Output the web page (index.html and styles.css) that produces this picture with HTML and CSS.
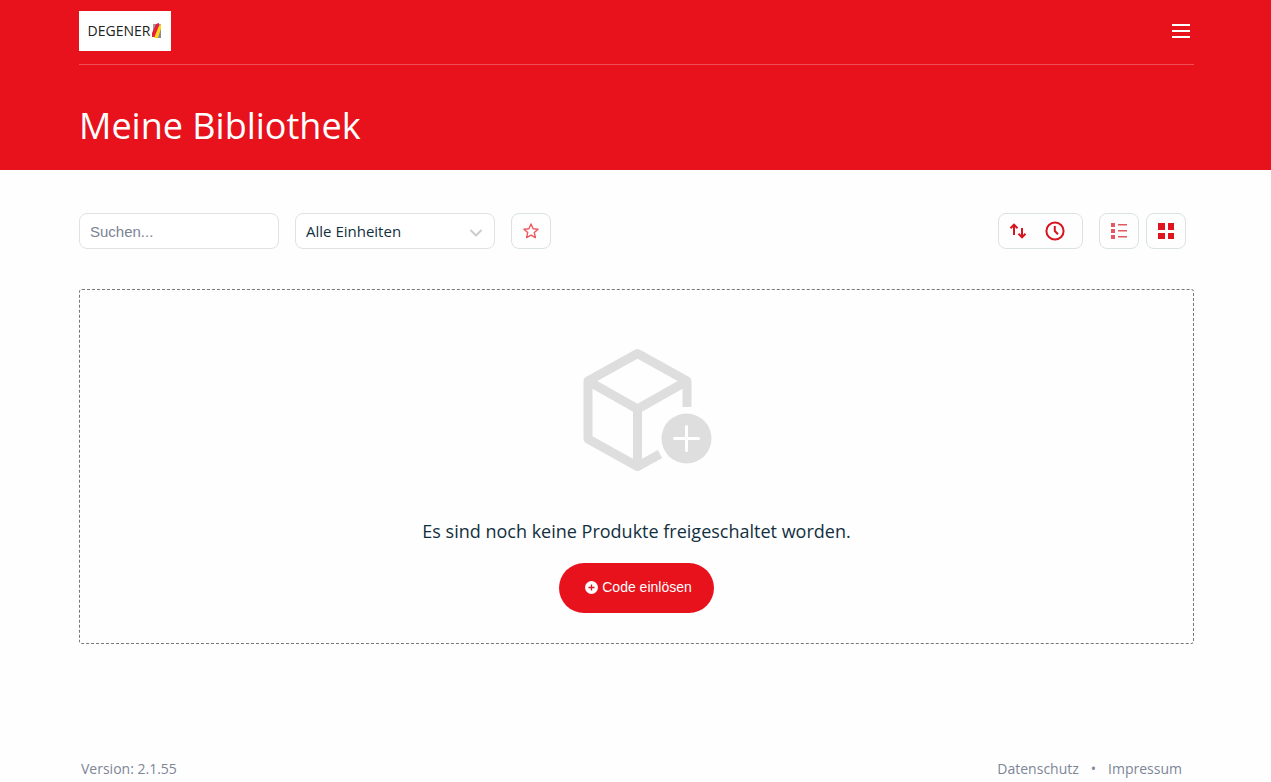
FILE: index.html
```html
<!DOCTYPE html>
<html lang="de">
<head>
  <meta charset="UTF-8">
  <meta name="viewport" content="width=device-width, initial-scale=1.0">
  <title>Meine Bibliothek</title>
  <link rel="stylesheet" href="styles.css">
</head>
<body>
  <header class="header">
    <div class="container">
      <div class="topbar">
        <a href="#" class="logo">
          <span>DEGENER</span>
          <svg width="10" height="15" viewBox="0 0 10 15" aria-hidden="true">
            <path d="M1 1h8v13H1z" fill="#a39a9e"/>
            <path d="M0 14V10L4 1l3-1v4L3 14z" fill="#e2203a"/>
            <path d="M2 15 6.500 4 9 1v5L6 15z" fill="#ffd51a"/>
            <path d="M6 15 9 6v9z" fill="#8c8a90"/>
          </svg>
        </a>
        <button class="menu" aria-label="Menü">
          <svg width="18" height="16" viewBox="0 0 18 16" fill="#fff">
            <path d="M0 1h18v2H0zM0 7h18v2H0zM0 13h18v2H0z"/>
          </svg>
        </button>
      </div>
      <h1>Meine Bibliothek</h1>
    </div>
  </header>

  <main class="container">
    <!-- Filter -->
    <div class="toolbar">
      <input type="text" class="field search" placeholder="Suchen..." aria-label="Suchen">
      <div class="select">
        <select class="field" aria-label="Einheiten">
          <option>Alle Einheiten</option>
        </select>
        <svg class="chevron" width="12" height="8" viewBox="0 0 12 8" fill="none" stroke="#ccc" stroke-width="2" stroke-linecap="round" stroke-linejoin="round" aria-hidden="true">
          <path d="M1 1.500l5 5 5-5"/>
        </svg>
      </div>
      <button class="tool inactive" aria-label="Favoriten">
        <svg width="16" height="16" viewBox="0 0 16 16" fill="none" stroke="#e8121d" stroke-width="1.400" stroke-linejoin="round">
          <path d="M8 1l2.100 4.700 5 .5-3.800 3.400 1.100 5L8 12.100 3.600 14.600l1.100-5L.9 6.200l5-.5z"/>
        </svg>
      </button>

      <div class="sort">
        <button aria-label="Sortierrichtung">
          <svg width="18" height="16" viewBox="0 0 18 16" fill="none" stroke="#d8141f" stroke-width="2">
            <path d="M5 12V2M1.500 5.200 5 1.700l3.500 3.500M13 5v9M9.500 10.800l3.500 3.500 3.500-3.500"/>
          </svg>
        </button>
        <button aria-label="Nach Datum sortieren">
          <svg width="20" height="20" viewBox="0 0 20 20" fill="none" stroke="#d8141f" stroke-width="2">
            <circle cx="10" cy="10" r="8.600"/>
            <path d="M9.800 5v5l3.200 3.200"/>
          </svg>
        </button>
      </div>
      <div class="views">
        <button class="tool inactive" aria-label="Listenansicht">
          <svg width="16" height="16" viewBox="0 0 16 16" fill="#d8141f">
            <path d="M0 0h4v4H0zM0 6h4v4H0zM0 12h4v4H0zM7 1h9v1.500H7zM7 7h9v1.500H7zM7 13h9v1.500H7z"/>
          </svg>
        </button>
        <button class="tool" aria-label="Kachelansicht">
          <svg width="16" height="16" viewBox="0 0 16 16" fill="#e01420">
            <path d="M0 0h7v7H0zM10 0h6v7h-6zM0 10h7v6H0zM10 10h6v6h-6z"/>
          </svg>
        </button>
      </div>
    </div>

    <section class="empty">
      <svg class="box" width="130" height="124" viewBox="0 0 130 124" aria-hidden="true">
        <g fill="none" stroke="#dedede" stroke-width="9" stroke-linejoin="round">
          <path d="M104 59V33L54.500 5.500 5 33v58l49.500 27.500L77 106"/>
          <path d="M5 33l49.500 28L104 33M54.500 61v57"/>
        </g>
        <circle cx="103.500" cy="90.500" r="25" fill="#dedede"/>
        <path d="M91.500 90.500h24M103.500 78.500v24" stroke="#fff" stroke-width="3" stroke-linecap="round"/>
      </svg>
      <p>Es sind noch keine Produkte freigeschaltet worden.</p>
      <button class="redeem">
        <svg width="13" height="13" viewBox="0 0 13 13" aria-hidden="true">
          <circle cx="6.500" cy="6.500" r="6.500" fill="#fff"/>
          <path d="M3.500 6.500h6M6.500 3.500v6" stroke="#e8121d" stroke-width="1.300"/>
        </svg>
        Code einlösen
      </button>
    </section>
  </main>

  <footer class="footer container">
    <span>Version: 2.1.55</span>
    <nav>
      <a href="#">Datenschutz</a>
      <span>•</span>
      <a href="#">Impressum</a>
    </nav>
  </footer>
</body>
</html>
```
FILE: styles.css
```css
* {
  box-sizing: border-box;
}

body {
  display: flex;
  flex-direction: column;
  min-height: 100vh;
  margin: 0;
  font-family: "Open Sans", sans-serif;
  color: #12303f;
  background: #fefefe;
}

button {
  display: flex;
  align-items: center;
  justify-content: center;
  padding: 0;
  border: none;
  background: none;
  cursor: pointer;
}

.container {
  width: 100%;
  padding: 0 77px 0 79px;
}

.header {
  height: 170px;
  background: #e8121d;
  color: #fff;
}

.topbar {
  display: flex;
  align-items: center;
  justify-content: space-between;
  height: 65px;
  padding: 0 4px 3px 0;
  border-bottom: 1px solid #f04d56;
}

.logo {
  display: flex;
  align-items: center;
  justify-content: center;
  gap: 2px;
  width: 92px;
  height: 40px;
  background: #fff;
  color: #222;
  font-size: 14px;
  font-weight: 500;
  text-decoration: none;
}

h1 {
  margin: 34px 0 0;
  font-size: 36px;
  line-height: 54px;
  font-weight: 400;
}

.toolbar {
  display: flex;
  align-items: center;
  gap: 16px;
  padding: 43px 8px 40px 0;
}

.field {
  width: 200px;
  height: 36px;
  padding: 0 10px;
  border: 1px solid #dfe3e4;
  border-radius: 8px;
  background: #fff;
  color: #12303f;
  font-family: "Open Sans", sans-serif;
  font-size: 15px;
}

.search {
  font-family: "Liberation Sans", sans-serif;
}

.search::placeholder {
  color: #7b8494;
}

.select {
  display: flex;
  position: relative;
}

.select select {
  appearance: none;
}

.chevron {
  position: absolute;
  right: 13px;
  top: 16px;
  pointer-events: none;
}

.tool,
.sort {
  width: 40px;
  height: 36px;
  border: 1px solid #dbe2e4;
  border-radius: 8px;
}

.inactive svg {
  opacity: 0.7;
}

.sort {
  display: flex;
  align-items: center;
  gap: 18px;
  width: 85px;
  padding-left: 10px;
  margin-left: auto;
}

.views {
  display: flex;
  gap: 7px;
}

.empty {
  display: flex;
  flex-direction: column;
  align-items: center;
  padding: 58px 20px 30px;
  border: 1px dashed #777;
  border-radius: 3px;
}

.box {
  margin-left: 22px;
}

.empty p {
  margin: 46px 0 18px;
  font-size: 18px;
  line-height: 27px;
}

.redeem {
  gap: 4px;
  height: 50px;
  padding: 0 22px 2px 26px;
  border-radius: 25px;
  background: #e8121d;
  color: #fff;
  font-family: "Liberation Sans", sans-serif;
  font-size: 14px;
}

.footer {
  display: flex;
  justify-content: space-between;
  margin-top: auto;
  padding: 0 89px 3px 81px;
  color: #7d8597;
  font-size: 14px;
  line-height: 20px;
}

.footer nav {
  display: flex;
  gap: 12px;
}

.footer a {
  color: inherit;
  text-decoration: none;
}
```
